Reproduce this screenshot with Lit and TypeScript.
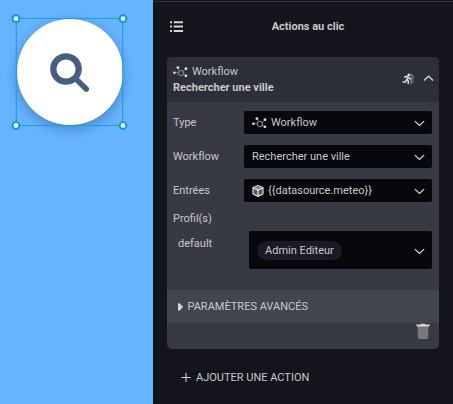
import { LitElement, html, css, svg } from "lit";
import { customElement, property } from "lit/decorators.js";

const workflowIcon = html`<svg width="15" height="12" viewBox="0 0 15 12">
  <g fill="none" stroke="#77787e" stroke-width="1">
    <path d="M1.5 6.8L5 6.6M5 1.6L6.3 4.4M10.2 5.5L13 2.6M10.4 8.2L13 9.8" />
    <circle cx="7.9" cy="7" r="2.6" stroke-width="1.4" />
  </g>
  <g fill="#dcdcdc">
    <circle cx="1.4" cy="6.8" r="1.3" /><circle cx="4.9" cy="1.6" r="1.4" />
    <circle cx="13" cy="2.7" r="1.4" /><circle cx="12.9" cy="9.8" r="1.4" />
  </g>
</svg>`;

const cubeIcon = html`<svg width="12" height="12" viewBox="0 0 12 12">
  <path d="M6 .6L11 2.7V8.8L6 11.3L1 8.8V2.7Z" fill="#55565a" stroke="#d2d0cb" stroke-width="1.3" stroke-linejoin="round" />
  <path d="M1.2 2.9L6 5L10.8 2.9L6 .9Z" fill="#85857f" />
  <path d="M1.2 3L6 5.1L10.8 3M6 5.1V11" fill="none" stroke="#e0ded8" stroke-width="1.3" />
</svg>`;

const chevron = (up = false) => html`<svg width="11" height="7" viewBox="0 0 11 7">
  ${svg`<path d=${up ? "M.9 5.5L5.5 1.2L10.1 5.5" : "M.9 1.1L5.5 5.4L10.1 1.1"} fill="none" stroke="#d5d5c8" stroke-width="1.3"/>`}
</svg>`;

@customElement("select-box")
class SelectBox extends LitElement {
  static styles = css`
    :host { display: flex; align-items: center; box-sizing: border-box; height: 23px; padding: 0 7px 0 8px; background: #07080c; border-radius: 2px; }
    .value { flex: 1; display: flex; align-items: center; }
    svg { display: block; }
    .arrow { padding-top: 2px; }
  `;
  render() {
    return html`<div class="value"><slot></slot></div><div class="arrow">${chevron()}</div>`;
  }
}

@customElement("form-row")
class FormRow extends LitElement {
  @property() label = "";
  static styles = css`
    :host { display: grid; grid-template-columns: 71px 1fr; align-items: center; height: 23px; }
  `;
  render() {
    return html`<span>${this.label}</span><slot></slot>`;
  }
}

@customElement("app-root")
class AppRoot extends LitElement {
  static styles = css`
    :host { display: flex; width: 453px; height: 404px; overflow: hidden; font: 11px/14px Roboto, sans-serif; color: #c8c8c8; }
    svg { display: block; flex: none; }
    .canvas { position: relative; width: 153px; background: #66b3ff; flex: none; }
    .round { position: absolute; left: 17px; top: 19px; width: 106px; height: 106px; border-radius: 50%; background: #fff; box-shadow: 0 4px 12px rgba(0, 30, 70, .3); }
    .overlay { position: absolute; left: 0; top: 0; }
    .panel { flex: 1; box-sizing: border-box; margin-top: 1px; border-top: 1px solid #303038; padding: 0 14px; background: #14141d; }
    .wrap { display: flex; flex: 1; background: #14141d; }
    .title { display: grid; grid-template-columns: 14px 1fr 4px; align-items: center; height: 49px; padding: 0 3px; text-align: center; font-weight: 700; margin-bottom: 6px; }
    .card { height: 292px; border-radius: 5px; overflow: hidden; background: #383a43; }
    .head { box-sizing: border-box; height: 45px; padding: 7px 5px 0 6px; background: #2d2f38; display: flex; }
    .names { flex: 1; line-height: 16px; }
    .kind { display: flex; align-items: center; gap: 4px; }
    .names b { display: block; }
    .tools { display: flex; align-items: center; gap: 9px; height: 29px; }
    .body { box-sizing: border-box; height: 188px; padding: 9px 7px 0 6px; display: flex; flex-direction: column; gap: 11px; }
    .body svg { margin-right: 4px; }
    .profile { margin-top: -1px; }
    .profile-row { display: grid; grid-template-columns: 71px 1fr; margin-top: 5px; padding-left: 5px; }
    .profile-row select-box { height: 38px; }
    .name { padding-top: 6px; }
    .chip { height: 19px; line-height: 19px; padding: 0 8px; border-radius: 10px; background: #1b1b27; }
    .advanced { display: flex; align-items: center; height: 33px; gap: 4.5px; padding-left: 11px; background: #414550; }
    .foot { display: flex; justify-content: flex-end; padding: 0 9px; }
    .add { display: flex; align-items: center; gap: 5px; padding: 22px 0 0 14px; }
    .add svg { margin-top: -2px; }
  `;
  render() {
    const corners = [[16, 18.7], [123, 18.7], [16, 125.5], [123, 125.5]];
    return html`
      <div class="canvas">
        <div class="round"></div>
        <svg class="overlay" width="153" height="140" viewBox="0 0 153 140">
          <g fill="none" stroke="#465f80" stroke-linecap="round">
            <circle cx="66" cy="69" r="12.7" stroke-width="6.2" />
            <path d="M76.2 79.2L86.2 89" stroke-width="5.6" />
          </g>
          <rect x="16.3" y="18.5" width="106.4" height="107" fill="none" stroke="#169fdc" />
          ${corners.map(([x, y]) => svg`<circle cx=${x} cy=${y} r="3.4" fill="#fff" stroke="#0c9bd9" stroke-width="2"/>`)}
        </svg>
      </div>
      <div class="wrap">
        <div class="panel">
          <div class="title">
            <svg width="14" height="12" viewBox="0 0 14 12">
              <path d="M0 1.2H2M0 5.6H2M0 10H2M3.7 1.2H13M3.7 5.6H13M3.7 10H13" stroke="#d6d4cf" stroke-width="2" />
            </svg>
            <span>Actions au clic</span>
          </div>
          <div class="card">
            <div class="head">
              <div class="names">
                <div class="kind">${workflowIcon}<span>Workflow</span></div>
                <b>Rechercher une ville</b>
              </div>
              <div class="tools">
                <svg width="12" height="12" viewBox="0 0 12 12">
                  <path d="M8 .8L10 .5L11.6 2.5V9L10 11.3H8Z" fill="#65666a" />
                  <circle cx="6.8" cy="1.9" r="1.3" fill="#ddd" />
                  <path d="M2 4.4L4.4 3.3L6 4L4.7 6.7L6.5 8.2L6 11M4.7 6.7L3.3 9H.5M6 4L7.3 5.8H9" fill="none" stroke="#dcdcd8" stroke-width="1.5" />
                </svg>
                ${chevron(true)}
              </div>
            </div>
            <div class="body">
              <form-row label="Type"><select-box>${workflowIcon}<span>Workflow</span></select-box></form-row>
              <form-row label="Workflow"><select-box>Rechercher une ville</select-box></form-row>
              <form-row label="Entrées"><select-box>${cubeIcon}<span>{{datasource.meteo}}</span></select-box></form-row>
              <div>
                <div class="profile">Profil(s)</div>
                <div class="profile-row">
                  <span class="name">default</span>
                  <select-box><span class="chip">Admin Editeur</span></select-box>
                </div>
              </div>
            </div>
            <div class="advanced">
              <svg width="5" height="8" viewBox="0 0 5 8"><path d="M0 .3L1.5 .3L4.5 3.2V4.8L1.5 7.7H0Z" fill="#d5d5d2" /></svg>
              <span>PARAMÈTRES AVANCÉS</span>
            </div>
            <div class="foot">
              <svg width="14" height="17" viewBox="0 0 14 17">
                <path d="M1.5 3H12.5L12 15Q12 16 11 16H3Q2 16 2 15Z" fill="#77787b" />
                <path d="M0 1.5H4.5L5 .8H9L9.5 1.5H14L13 3.4H1Z" fill="#d7d6d2" />
              </svg>
            </div>
          </div>
          <div class="add">
            <svg width="10" height="10" viewBox="0 0 10 10"><path d="M.3 5.5H9.7M5 .8V10" stroke="#d0d0ce" stroke-width="1.1" /></svg>
            <span>AJOUTER UNE ACTION</span>
          </div>
        </div>
      </div>
    `;
  }
}
